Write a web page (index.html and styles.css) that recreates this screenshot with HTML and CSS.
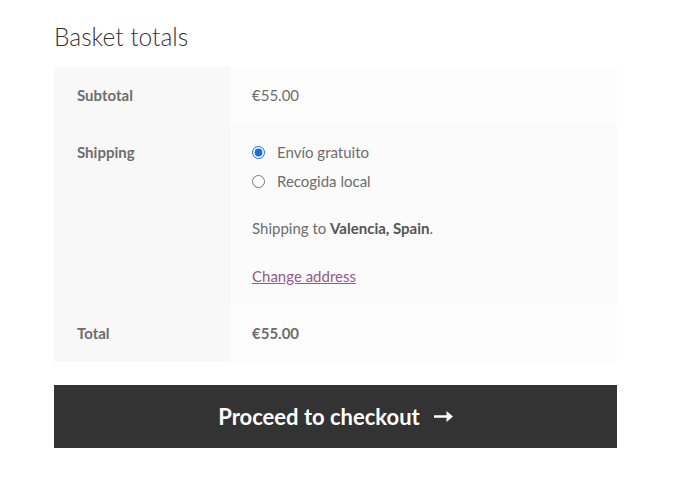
FILE: index.html
```html
<!DOCTYPE html>
<html lang="en">
<head>
<meta charset="utf-8">
<title>Basket totals</title>
<link rel="stylesheet" href="styles.css">
</head>
<body>
<div class="cart-totals">
  <h2 class="title">Basket totals</h2>
  <table class="totals">
    <tr class="row">
      <th>Subtotal</th>
      <td>€55.00</td>
    </tr>
    <tr class="row row-even">
      <th>Shipping</th>
      <td>
        <ul class="methods">
          <li><label><input type="radio" name="ship" checked> Envío gratuito</label></li>
          <li><label><input type="radio" name="ship"> Recogida local</label></li>
        </ul>
        <p class="dest">Shipping to <strong>Valencia, Spain</strong>.</p>
        <p class="change"><a href="#">Change address</a></p>
      </td>
    </tr>
    <tr class="row">
      <th>Total</th>
      <td><strong>€55.00</strong></td>
    </tr>
  </table>
  <a class="checkout" href="#">Proceed to checkout
    <svg class="arrow" width="19" height="13" viewBox="0 0 19 13"><path d="M0 5.2h12.5V1l6.5 5.5-6.5 5.5V7.8H0z" fill="#fff"/></svg>
  </a>
</div>
</body>
</html>
```
FILE: styles.css
```css
html, body { margin: 0; padding: 0; background: #fff; }
body { font-family: "Lato", "Liberation Sans", sans-serif; color: #6d6d6d; font-size: 15px; }
.cart-totals { width: 563px; margin-left: 54px; padding-top: 20px; }
.title { margin: 0 0 13px; font-size: 24.5px; font-weight: 300; color: #333; line-height: 34px; }
.totals { width: 100%; border-collapse: collapse; border-spacing: 0; }
.totals th { width: 176px; box-sizing: border-box; background: #f8f8f8; text-align: left; vertical-align: top; font-weight: 700; padding: 15px 23px 16px; line-height: 26px; color: #6d6d6d; }
.totals td { background: #fdfdfd; vertical-align: top; padding: 15px 22px 16px; line-height: 26px; }
.row-even td { background: #fbfbfb; }
.methods { list-style: none; margin: 0 0 21px; padding: 0; }
.methods li { height: 26px; margin-bottom: 3px; }
.methods label { display: flex; align-items: center; }
.methods input { width: 13px; height: 13px; margin: 0 12px 0 0; accent-color: #1a6de0; }
.dest { margin: 0 0 22px; }
.dest strong { color: #555; }
.change { margin: 0; }
.change a { color: #96588a; text-decoration: underline; }
.checkout { margin-top: 23px; height: 63px; background: #333; color: #fff; font-weight: 700; font-size: 22px; text-decoration: none; display: flex; align-items: center; justify-content: center; gap: 14px; }
.arrow { display: block; }
```
